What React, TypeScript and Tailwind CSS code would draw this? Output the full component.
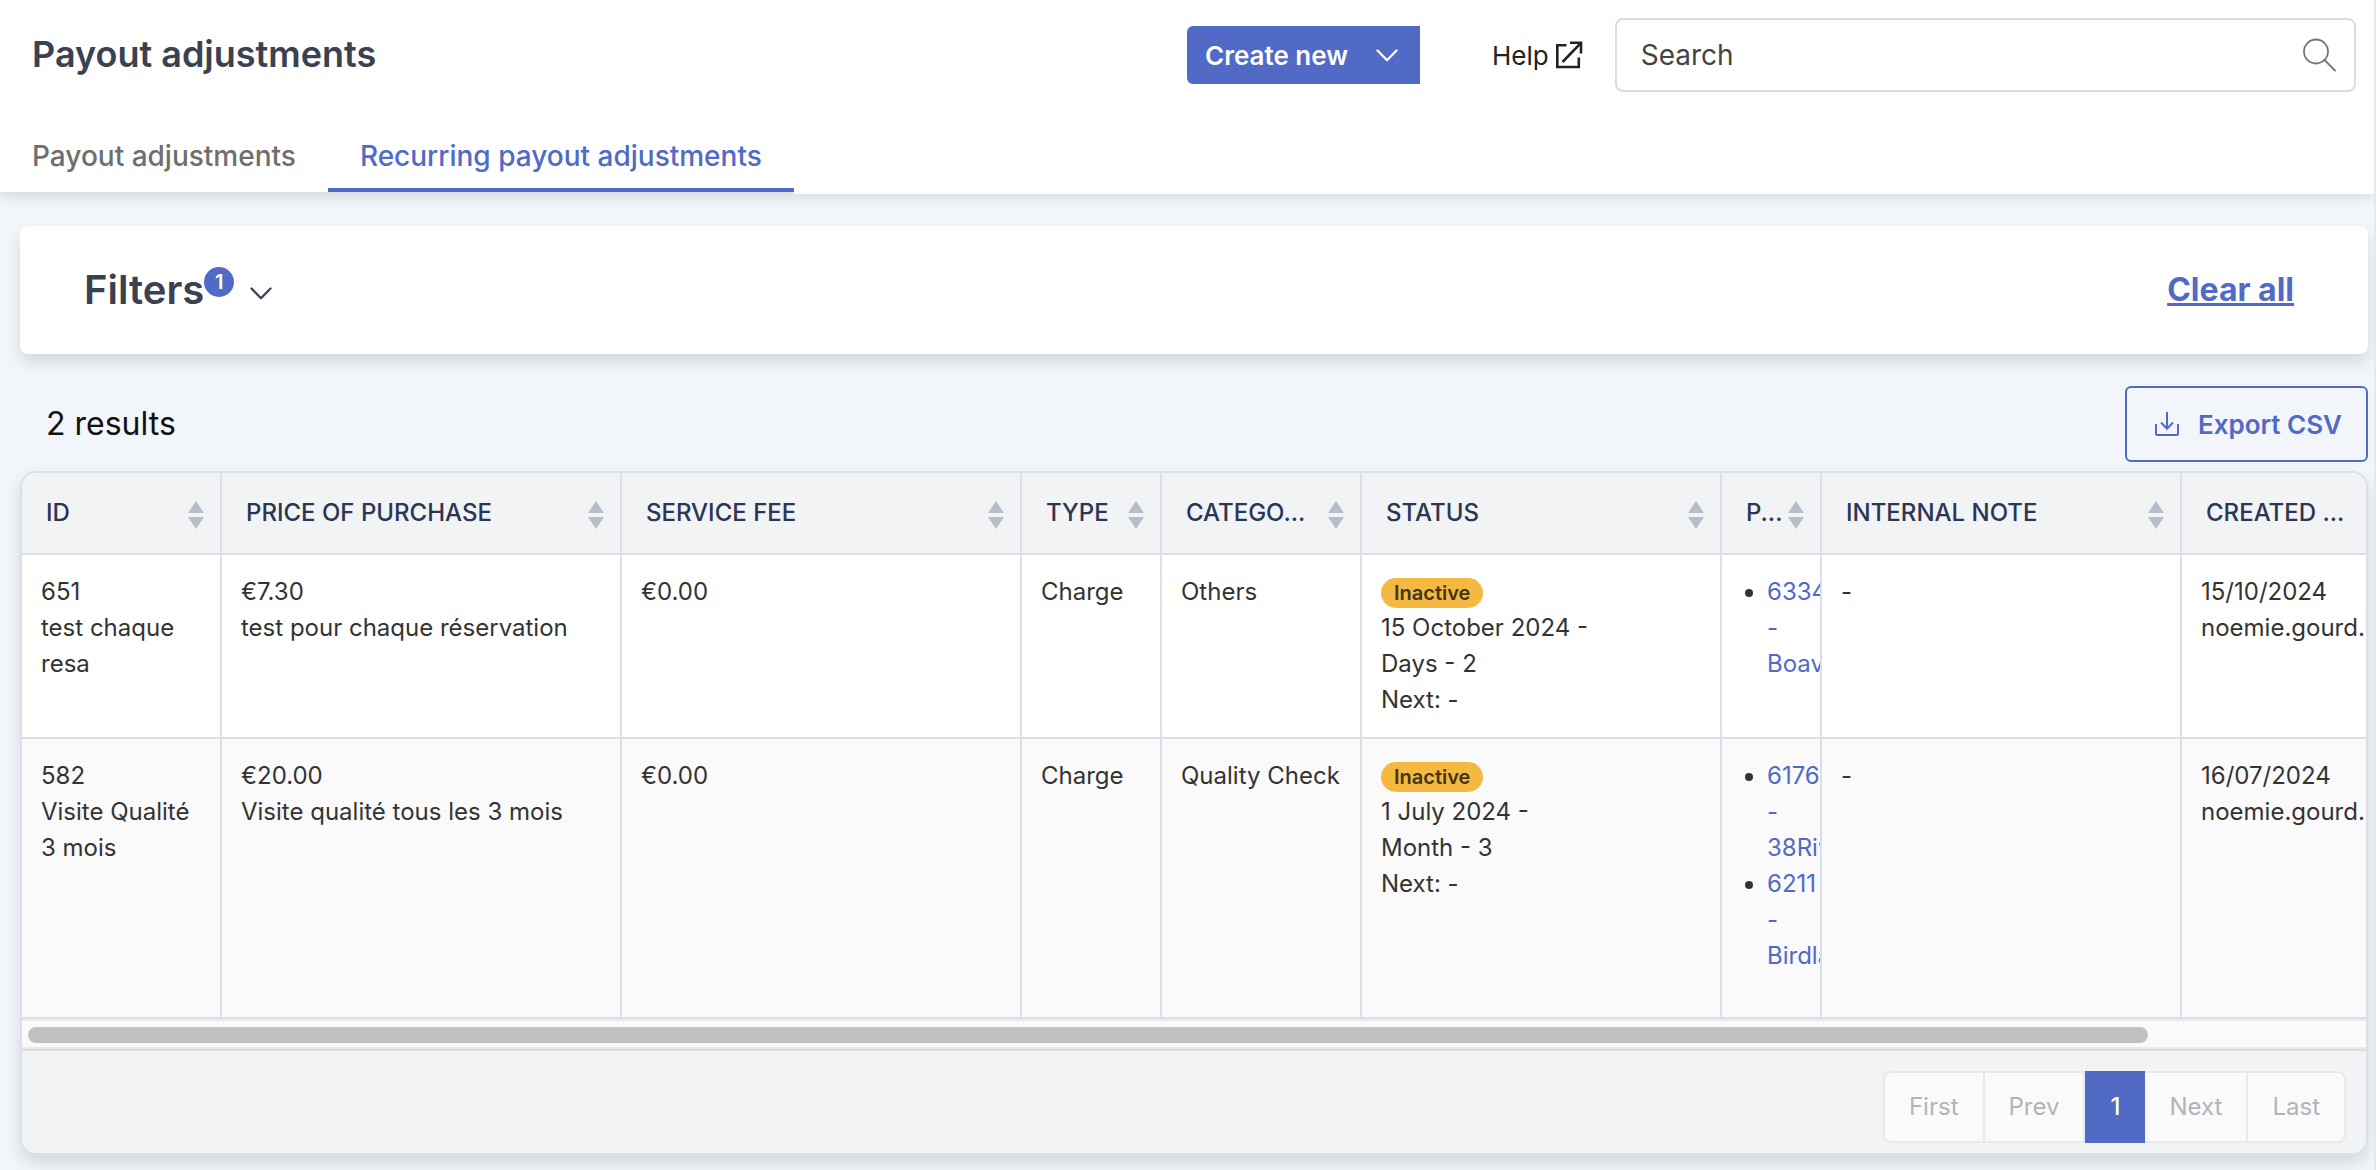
import { useState } from "react";

interface Column {
  label: string;
  width: number;
}

interface Property {
  id: number;
  name: string;
}

interface Adjustment {
  id: number;
  name: string;
  price: string;
  description: string;
  serviceFee: string;
  type: string;
  category: string;
  status: string;
  start: string;
  frequency: string;
  next: string;
  properties: Property[];
  note: string;
  createdAt: string;
  createdBy: string;
}

const COLUMNS: Column[] = [
  { label: "ID", width: 200 },
  { label: "PRICE OF PURCHASE", width: 400 },
  { label: "SERVICE FEE", width: 400 },
  { label: "TYPE", width: 140 },
  { label: "CATEGO...", width: 200 },
  { label: "STATUS", width: 360 },
  { label: "P...", width: 100 },
  { label: "INTERNAL NOTE", width: 360 },
  { label: "CREATED ...", width: 230 },
];

const TABLE_WIDTH = COLUMNS.reduce((sum, c) => sum + c.width, 0);

const ADJUSTMENTS: Adjustment[] = [
  {
    id: 651,
    name: "test chaque resa",
    price: "€7.30",
    description: "test pour chaque réservation",
    serviceFee: "€0.00",
    type: "Charge",
    category: "Others",
    status: "Inactive",
    start: "15 October 2024 -",
    frequency: "Days - 2",
    next: "Next: -",
    properties: [{ id: 6334, name: "Boav" }],
    note: "-",
    createdAt: "15/10/2024",
    createdBy: "noemie.gourd.",
  },
  {
    id: 582,
    name: "Visite Qualité 3 mois",
    price: "€20.00",
    description: "Visite qualité tous les 3 mois",
    serviceFee: "€0.00",
    type: "Charge",
    category: "Quality Check",
    status: "Inactive",
    start: "1 July 2024 -",
    frequency: "Month - 3",
    next: "Next: -",
    properties: [
      { id: 6176, name: "38Riv" },
      { id: 6211, name: "Birdla" },
    ],
    note: "-",
    createdAt: "16/07/2024",
    createdBy: "noemie.gourd.",
  },
];

const TABS = ["Payout adjustments", "Recurring payout adjustments"];

const CELL = "overflow-hidden border-r-2 border-b-2 border-[#dbdfec] px-[19px] py-[19px] align-top";

function Chevron() {
  return (
    <svg width="22" height="13" viewBox="0 0 22 13" fill="none" stroke="currentColor" strokeWidth="2.3" strokeLinecap="round" strokeLinejoin="round" aria-hidden="true">
      <path d="M1.500 1.500l9.500 9.700 9.500-9.700" />
    </svg>
  );
}

function ExternalIcon() {
  return (
    <svg width="28" height="28" viewBox="0 0 28 28" fill="none" stroke="currentColor" strokeWidth="2.6" aria-hidden="true">
      <path d="M11.500 4.300H2.300V26H23.800V16.500" />
      <path d="M15 1.800H26V12.500" />
      <path d="M26 1.800L7.500 21" />
    </svg>
  );
}

function SearchIcon() {
  return (
    <svg width="34" height="34" viewBox="0 0 34 34" fill="none" stroke="#777" strokeWidth="1.8" strokeLinecap="round" aria-hidden="true">
      <circle cx="14" cy="13.500" r="12" />
      <path d="M22.500 22l10.500 10.500" />
    </svg>
  );
}

function DownloadIcon() {
  return (
    <svg width="24" height="24" viewBox="0 0 24 24" fill="none" stroke="currentColor" strokeWidth="2" aria-hidden="true">
      <path d="M12 0v16.500M6 10.500l6 6.200 6-6.200" />
      <path d="M1 12v9.500a1.500 1.500 0 0 0 1.500 1.500h19a1.500 1.500 0 0 0 1.500-1.500V12" />
    </svg>
  );
}

function SortIcon() {
  return (
    <svg className="mt-1 shrink-0" width="16" height="28" viewBox="0 0 16 28" fill="#b9bdc9" aria-hidden="true">
      <path d="M8 0l8 12H0zM0 16h16l-8 12z" />
    </svg>
  );
}

function Header() {
  const [tab, setTab] = useState(1);

  return (
    <header className="relative bg-white pb-0.5 shadow-[0_4px_10px_rgba(0,0,0,0.1)]">
      <div className="grid h-[110px] grid-cols-2 items-center">
        <h1 className="pb-0.5 pl-8 text-[36px] font-semibold text-[#3a4150]">Payout adjustments</h1>
        <div className="flex items-center pr-[18px]">
          <button className="flex h-[58px] shrink-0 items-center gap-7 rounded-l-md bg-[#506ac6] pr-[22px] pl-[18px] text-[26px] font-semibold text-white">
            Create new
            <Chevron />
          </button>
          <a href="#help" className="ml-[72px] flex shrink-0 items-center gap-1.5 text-[26px] text-[#222]">
            Help
            <ExternalIcon />
          </a>
          <label className="ml-8 flex h-[74px] min-w-0 flex-1 items-center rounded-lg border-2 border-[#dcdce2] pr-[18px] pl-6">
            <input
              type="search"
              aria-label="Search"
              placeholder="Search"
              className="min-w-0 flex-1 bg-transparent text-[28px] outline-none placeholder:text-[#444]"
            />
            <SearchIcon />
          </label>
        </div>
      </div>
      <nav className="-mb-0.5 flex w-fit border-b-2 border-[#dfe2e5]">
        {TABS.map((label, i) => (
          <button
            key={label}
            onClick={() => setTab(i)}
            className={`border-b-4 px-8 pt-7 pb-3.5 text-[28px] leading-9 font-medium ${
              tab === i ? "border-[#506ac6] text-[#506ac6]" : "border-transparent text-[#6e6e6e]"
            }`}
          >
            {label}
          </button>
        ))}
      </nav>
    </header>
  );
}

function AdjustmentRow({ row }: { row: Adjustment }) {
  return (
    <tr className="bg-white even:bg-[#fafafa]">
      <td className={CELL}>
        <div>{row.id}</div>
        <div>{row.name}</div>
      </td>
      <td className={CELL}>
        <div>{row.price}</div>
        <div>{row.description}</div>
      </td>
      <td className={CELL}>{row.serviceFee}</td>
      <td className={CELL}>{row.type}</td>
      <td className={`${CELL} whitespace-nowrap`}>{row.category}</td>
      <td className={CELL}>
        <div className="flex h-9 items-center">
          <span className="mt-0.5 flex h-[30px] items-center rounded-full bg-[#f5b841] px-[13px] text-[20px] font-semibold text-[#433512]">
            {row.status}
          </span>
        </div>
        <div>{row.start}</div>
        <div>{row.frequency}</div>
        <div>{row.next}</div>
      </td>
      <td className={CELL}>
        <ul className="mb-6 list-disc pl-[26px]">
          {row.properties.map((p) => (
            <li key={p.id}>
              <a href={`#property-${p.id}`} className="text-[#506ac6]">
                {p.id} - {p.name}
              </a>
            </li>
          ))}
        </ul>
      </td>
      <td className={CELL}>{row.note}</td>
      <td className={CELL}>
        <div>{row.createdAt}</div>
        <div>{row.createdBy}</div>
      </td>
    </tr>
  );
}

function Pagination() {
  const side = "border-y-2 border-r-2 border-[#e8e9ec] bg-[#fafafa] px-6 text-[#b1b3ba]";

  return (
    <div className="flex justify-end border-t-2 border-[#dbdcde] bg-[#f1f3f5] px-5 pt-5 pb-2.5">
      <nav aria-label="Pagination" className="flex h-[72px] text-[24px]">
        <button className={`${side} rounded-l-lg border-l-2`}>First</button>
        <button className={side}>Prev</button>
        <button className="bg-[#506ac6] px-[25px] font-medium text-white">1</button>
        <button className={side}>Next</button>
        <button className={`${side} rounded-r-lg`}>Last</button>
      </nav>
    </div>
  );
}

export default function App() {
  return (
    <div className="min-h-screen overflow-hidden border-r-2 border-[#e7e8ec] bg-[#f2f5fa] font-[Inter,sans-serif]">
      <Header />
      <main className="pt-8 pr-1.5 pb-4 pl-5">
        <section className="flex h-32 items-center justify-between rounded-lg bg-white pr-[74px] pl-16 shadow-[0_8px_16px_rgba(0,0,0,0.12)]">
          <button className="flex items-center text-[#3a4150]">
            <span className="text-[40px] font-semibold">Filters</span>
            <span className="mb-4 flex size-[30px] items-center justify-center rounded-full bg-[#506ac6] text-[20px] font-semibold text-white">
              1
            </span>
            <span className="mt-1.5 ml-4">
              <Chevron />
            </span>
          </button>
          <button className="text-[32px] font-bold text-[#506ac6] underline decoration-3">Clear all</button>
        </section>

        <div className="mt-8 flex items-center justify-between pl-[26px]">
          <p className="text-[32px] text-[#111]">2 results</p>
          <button className="flex h-[76px] items-center gap-[19px] rounded-md border-2 border-[#506ac6] px-6 pl-7 text-[26px] font-semibold text-[#506ac6]">
            <DownloadIcon />
            Export CSV
          </button>
        </div>

        <section className="mt-[9px] overflow-hidden rounded-2xl border-2 border-[#dbdfec] shadow-[0_8px_16px_rgba(0,0,0,0.12)]">
          <div className="overflow-hidden">
            <table
              className="table-fixed border-separate border-spacing-0 text-[24px] leading-9 text-[#333]"
              style={{ width: TABLE_WIDTH }}
            >
              <colgroup>
                {COLUMNS.map((c) => (
                  <col key={c.label} style={{ width: c.width }} />
                ))}
              </colgroup>
              <thead>
                <tr className="bg-[#f1f3f5]">
                  {COLUMNS.map((c) => (
                    <th
                      key={c.label}
                      className="h-[82px] border-r-2 border-b-2 border-[#dbdfec] pr-4 pl-6 text-left font-medium whitespace-nowrap text-[#2b3554]"
                    >
                      <div className="flex items-center justify-between">
                        {c.label}
                        <SortIcon />
                      </div>
                    </th>
                  ))}
                </tr>
              </thead>
              <tbody>
                {ADJUSTMENTS.map((row) => (
                  <AdjustmentRow key={row.id} row={row} />
                ))}
              </tbody>
            </table>
          </div>
          <div className="border-y-2 border-[#eaeaea] bg-[#fafafa] px-1.5 pt-1.5 pb-1">
            <div className="h-4 w-10/11 rounded-full bg-[#c1c1c1]" />
          </div>
          <Pagination />
        </section>
      </main>
    </div>
  );
}
